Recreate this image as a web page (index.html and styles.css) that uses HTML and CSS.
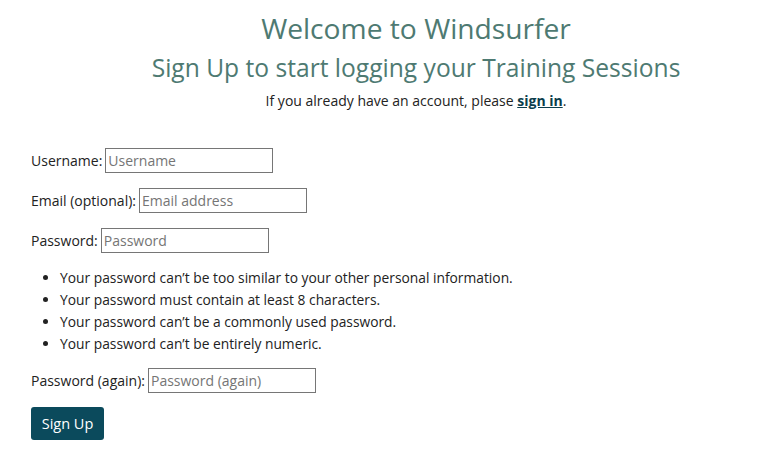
FILE: index.html
```html
<!DOCTYPE html>
<html>
<head>
<meta charset="utf-8">
<link rel="stylesheet" href="styles.css">
</head>
<body>
<div class="page">
  <header class="hero">
    <h1 class="title">Welcome to Windsurfer</h1>
    <h2 class="subtitle">Sign Up to start logging your Training Sessions</h2>
    <p class="note">If you already have an account, please <a href="#" class="link">sign in</a>.</p>
  </header>
  <form class="form">
    <p class="row"><label>Username:</label> <input class="field" type="text" placeholder="Username"></p>
    <p class="row"><label>Email (optional):</label> <input class="field" type="text" placeholder="Email address"></p>
    <p class="row"><label>Password:</label> <input class="field" type="password" placeholder="Password"></p>
    <ul class="rules">
      <li>Your password can’t be too similar to your other personal information.</li>
      <li>Your password must contain at least 8 characters.</li>
      <li>Your password can’t be a commonly used password.</li>
      <li>Your password can’t be entirely numeric.</li>
    </ul>
    <p class="row row-last"><label>Password (again):</label> <input class="field" type="password" placeholder="Password (again)"></p>
    <button class="btn" type="button">Sign Up</button>
  </form>
</div>
</body>
</html>
```
FILE: styles.css
```css
html, body { margin: 0; padding: 0; background: #fff; }
body {
  font-family: "Open Sans", "Noto Sans", sans-serif;
  font-size: 14px;
  color: #222;
}
.page { padding: 0 0 0 31px; }
.hero { text-align: center; padding-left: 32px; padding-top: 10px; }
.title {
  margin: 0;
  font-weight: 400;
  font-size: 28.2px;
  line-height: 36px;
  color: #4e7a72;
}
.subtitle {
  margin: 6px 0 0;
  font-weight: 400;
  font-size: 24.6px;
  line-height: 32px;
  color: #4e7a72;
}
.note { margin: 7px 0 0; line-height: 20px; }
.link { color: #0b3d4c; font-weight: 700; }
.form { margin-top: 37px; }
.row { margin: 0 0 15px; height: 25px; display: flex; align-items: center; gap: 3px; }
.row-last { margin-bottom: 14px; }
.field {
  width: 168px;
  height: 25px;
  box-sizing: border-box;
  border: 1px solid #767676;
  padding: 1px 2px;
  font-family: inherit;
  font-size: 14px;
  margin: 0;
}
.field::placeholder { color: #757575; }
.rules { margin: -1px 0 13px; padding-left: 29px; line-height: 22px; font-size: 13.8px; }
.btn {
  margin: 0;
  background: #0b4a5c;
  color: #fff;
  border: none;
  border-radius: 3px;
  font-family: inherit;
  font-size: 14.5px;
  height: 33px;
  width: 73px;
  padding: 0;
}
```
